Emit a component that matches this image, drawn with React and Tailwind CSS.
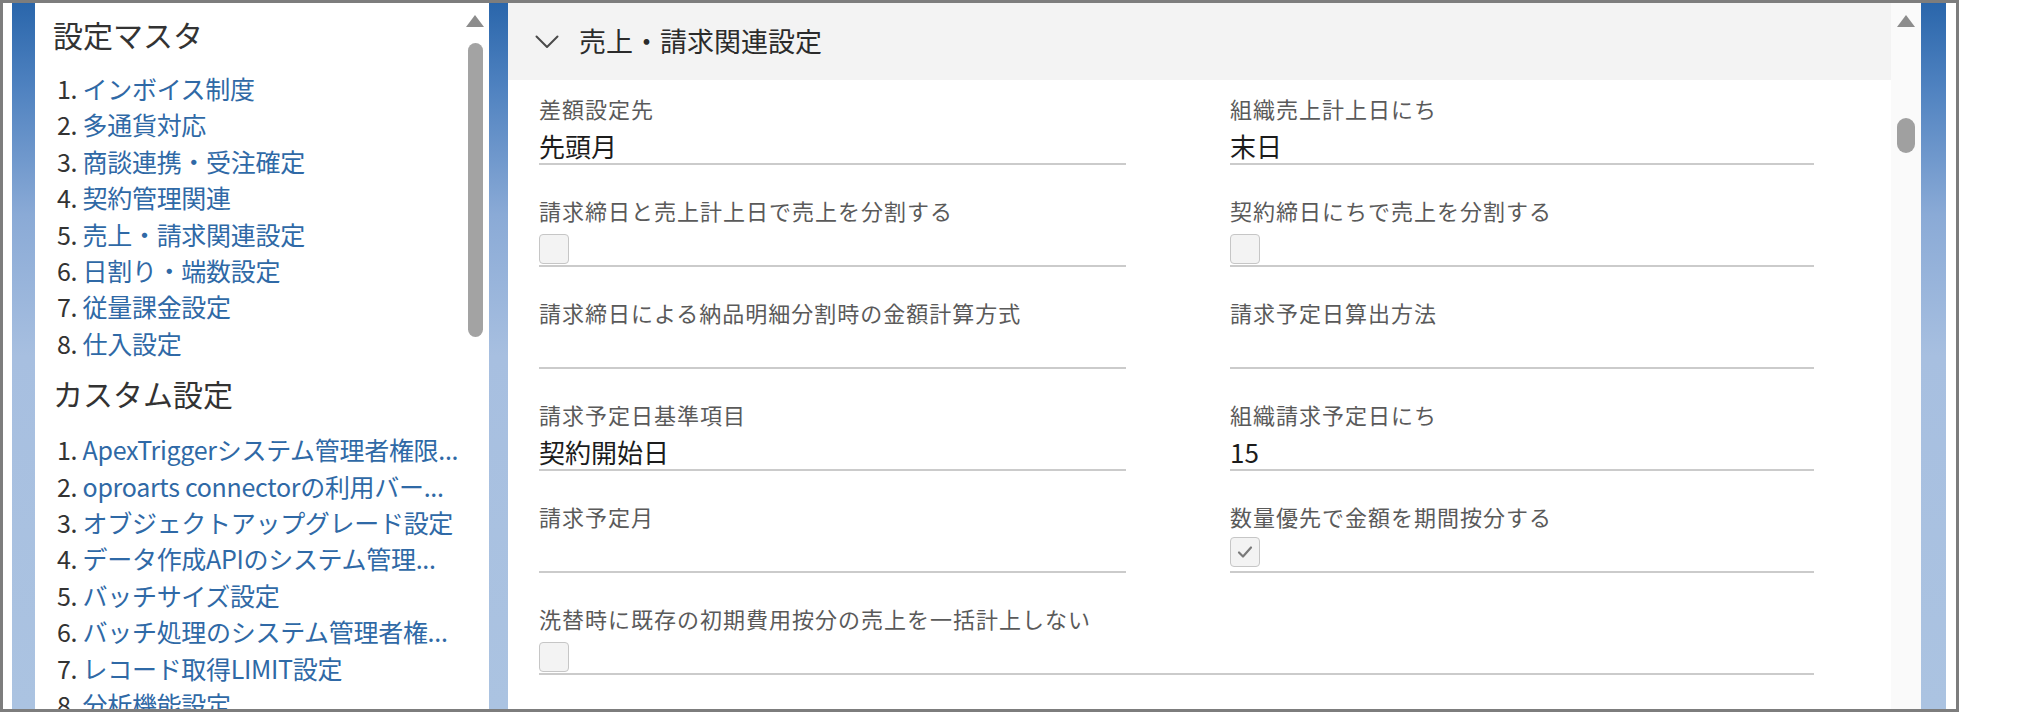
const masterItems = [
  "インボイス制度",
  "多通貨対応",
  "商談連携・受注確定",
  "契約管理関連",
  "売上・請求関連設定",
  "日割り・端数設定",
  "従量課金設定",
  "仕入設定",
];

const customItems = [
  "ApexTriggerシステム管理者権限...",
  "oproarts connectorの利用バー...",
  "オブジェクトアップグレード設定",
  "データ作成APIのシステム管理...",
  "バッチサイズ設定",
  "バッチ処理のシステム管理者権...",
  "レコード取得LIMIT設定",
  "分析機能設定",
];

function Stripe({ className }) {
  return (
    <div
      className={`shrink-0 self-stretch bg-[linear-gradient(180deg,#2a66ab_0%,#4f82c0_12%,#8aaad6_30%,#a7bfe0_50%,#abc3e1_100%)] ${className}`}
    />
  );
}

function UpArrow() {
  return <div className="h-0 w-0 border-x-[9px] border-b-[12px] border-x-transparent border-b-[#8c8c8c]" />;
}

function NavList({ items, className }) {
  return (
    <ol className={`pl-[4px] ${className}`}>
      {items.map((t, i) => (
        <li key={t} className="flex whitespace-nowrap text-[25px] leading-[36.4px] tracking-[-0.3px]">
          <span className="text-[#333]">{i + 1}.&nbsp;</span>
          <span className="text-[#2f69a6]">{t}</span>
        </li>
      ))}
    </ol>
  );
}

function Checkbox({ checked, className }) {
  return (
    <div
      className={`flex h-[30px] w-[30px] items-center justify-center rounded-[4px] border border-[#c6c6c6] bg-[#f3f3f3] ${className}`}
    >
      {checked && (
        <svg width="16" height="14" viewBox="0 0 16 14" fill="none">
          <path d="M2 7.5 L6 11.5 L14 2.5" stroke="#7a7a7a" strokeWidth="2.2" strokeLinecap="round" strokeLinejoin="round" />
        </svg>
      )}
    </div>
  );
}

function Field({ label, value, check, checked, span }) {
  return (
    <div className={`flex h-[71px] flex-col border-b-2 border-[#cbcbcb] ${span ? "col-span-2" : ""}`}>
      <div className="whitespace-nowrap text-[22px] leading-[28px] tracking-[1px] text-[#5a5a5a]">{label}</div>
      {check ? (
        <Checkbox checked={checked} className={checked ? "mt-[7px]" : "mt-[10px]"} />
      ) : (
        <div className="mt-[7px] h-[34px] text-[26px] leading-[34px] text-[#1c1c1c]">{value}</div>
      )}
    </div>
  );
}

export default function App() {
  return (
    <div className="h-[719px] w-[2027px] bg-white font-['Noto_Sans_CJK_JP','Noto_Sans',sans-serif]">
      <div className="flex h-[712px] w-[1959px] border-[3px] border-[#7d7d7d] pl-[9px]">
        <Stripe className="w-[23px]" />

        {/* left navigation panel */}
        <div className="flex w-[454px] shrink-0 overflow-hidden bg-white">
          <div className="min-w-0 flex-1 overflow-hidden pl-[18px] pt-[11px]">
            <h2 className="text-[30px] leading-[40px] text-[#333]">設定マスタ</h2>
            <NavList items={masterItems} className="mt-[16px]" />
            <h2 className="mt-[12px] text-[30px] leading-[40px] text-[#333]">カスタム設定</h2>
            <NavList items={customItems} className="mt-[18px]" />
          </div>
          <div className="flex w-[26px] shrink-0 flex-col items-center pr-[2px] pt-[12px]">
            <UpArrow />
            <div className="mt-[16px] h-[294px] w-[15px] rounded-full bg-[#a3a3a3]" />
          </div>
        </div>

        <Stripe className="w-[19px]" />

        {/* main section */}
        <div className="flex w-[1383px] shrink-0 flex-col bg-white">
          <div className="flex h-[77px] items-center bg-[#f3f3f3] pl-[27px]">
            <svg width="24" height="14" viewBox="0 0 24 14" fill="none">
              <path d="M1.5 1.5 L12 12 L22.5 1.5" stroke="#4a4a4a" strokeWidth="2" strokeLinecap="round" strokeLinejoin="round" />
            </svg>
            <span className="ml-[20px] text-[27px] text-[#2b2b2b]">売上・請求関連設定</span>
          </div>
          <div className="grid grid-cols-[587px_584px] gap-x-[104px] gap-y-[31px] pl-[31px] pt-[14px]">
            <Field label="差額設定先" value="先頭月" />
            <Field label="組織売上計上日にち" value="末日" />
            <Field label="請求締日と売上計上日で売上を分割する" check />
            <Field label="契約締日にちで売上を分割する" check />
            <Field label="請求締日による納品明細分割時の金額計算方式" value="" />
            <Field label="請求予定日算出方法" value="" />
            <Field label="請求予定日基準項目" value="契約開始日" />
            <Field label="組織請求予定日にち" value="15" />
            <Field label="請求予定月" value="" />
            <Field label="数量優先で金額を期間按分する" check checked />
            <Field label="洗替時に既存の初期費用按分の売上を一括計上しない" check span />
          </div>
        </div>

        {/* main scrollbar */}
        <div className="flex w-[30px] shrink-0 flex-col items-center bg-[#fafafa] pt-[12px]">
          <UpArrow />
          <div className="mt-[91px] h-[35px] w-[18px] rounded-full bg-[#a0a0a0]" />
        </div>

        <Stripe className="w-[25px]" />
      </div>
    </div>
  );
}
